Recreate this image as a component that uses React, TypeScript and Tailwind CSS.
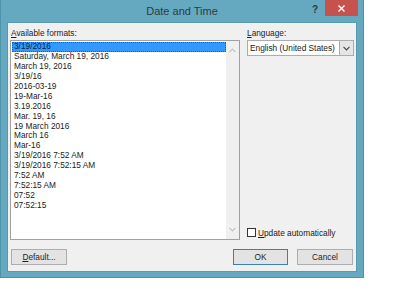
import React from 'react';

const formats = [
  '3/19/2016',
  'Saturday, March 19, 2016',
  'March 19, 2016',
  '3/19/16',
  '2016-03-19',
  '19-Mar-16',
  '3.19.2016',
  'Mar. 19, 16',
  '19 March 2016',
  'March 16',
  'Mar-16',
  '3/19/2016 7:52 AM',
  '3/19/2016 7:52:15 AM',
  '7:52 AM',
  '7:52:15 AM',
  '07:52',
  '07:52:15',
];

function Chevron({ up, className }: { up?: boolean; className?: string }) {
  return (
    <svg width="7" height="5" viewBox="0 0 7 5" className={className}>
      <path
        d={up ? 'M0.5 4.2 L3.5 1 L6.5 4.2' : 'M0.5 0.8 L3.5 4 L6.5 0.8'}
        fill="none"
        stroke="currentColor"
        strokeWidth="1.1"
      />
    </svg>
  );
}

function Button({ children, primary, className }: { children: React.ReactNode; primary?: boolean; className?: string }) {
  return (
    <div
      className={`h-[16px] flex items-center justify-center bg-[#e3e3e3] border ${
        primary ? 'border-[#3c7fb1]' : 'border-[#adadad]'
      } text-[8.3px] text-[#1e1e1e] ${className ?? ''}`}
    >
      {children}
    </div>
  );
}

export default function App() {
  return (
    <div className="w-[400px] h-[304px] bg-white font-['Liberation_Sans',Arial,sans-serif]">
      {/* Window frame */}
      <div className="w-[364px] h-[278px] bg-[#65a9c1] border border-[#4f93ab] border-t-0 flex flex-col">
        {/* Title bar */}
        <div className="h-[22px] relative flex items-center justify-center">
          <span className="text-[11px] text-[#2f3b40] pt-[1px]">Date and Time</span>
          <span className="absolute left-[311px] top-[2px] text-[10px] font-bold text-[#2c3a40]">?</span>
          <div className="absolute left-[324px] top-0 w-[33px] h-[16px] bg-[#c7514d] flex items-center justify-center">
            <svg width="7" height="7" viewBox="0 0 7 7">
              <path d="M0.5 0.5 L6.5 6.5 M6.5 0.5 L0.5 6.5" stroke="#fff" strokeWidth="1.4" />
            </svg>
          </div>
        </div>

        {/* Client area */}
        <div className="mx-[6px] mb-[5px] flex-1 bg-[#f0f0f0] border border-[#5898b0] flex flex-col text-[8.3px] text-[#1a1a1a]">
          <div className="flex pt-[4px]">
            {/* Left column */}
            <div className="ml-[2px] w-[230px] flex flex-col">
              <div className="h-[12px] leading-[12px] pl-[1px] text-[#222]">
                <u>A</u>vailable formats:
              </div>
              <div className="mt-[1px] h-[200px] bg-white border border-[#a0a0a0] flex">
                <div className="flex-1 pt-[1px] pl-[1px]">
                  {formats.map((f, i) => (
                    <div
                      key={f}
                      className={`h-[9.94px] leading-[9.94px] pl-[2px] whitespace-nowrap ${
                        i === 0 ? 'bg-[#3399ff] outline-1 outline-dotted outline-[#1c5ea8] -outline-offset-1 text-[#0b1e3f]' : ''
                      }`}
                    >
                      {f}
                    </div>
                  ))}
                </div>
                <div className="w-[13px] bg-[#f0f0f0] flex flex-col items-center justify-between py-[7px] text-[#c2c2c2]">
                  <Chevron up />
                  <Chevron />
                </div>
              </div>
            </div>

            {/* Right column */}
            <div className="ml-[7px] w-[107px] flex flex-col">
              <div className="h-[12px] leading-[12px] text-[#222]">
                <u>L</u>anguage:
              </div>
              <div className="mt-[1px] h-[16px] bg-white border border-[#acacac] flex items-center">
                <span className="flex-1 pl-[2px] whitespace-nowrap">English (United States)</span>
                <div className="w-[14px] h-full bg-[#e6e6e6] border-l border-[#acacac] flex items-center justify-center text-[#444]">
                  <Chevron />
                </div>
              </div>
              <div className="mt-auto mb-[1px] flex items-center gap-[2px]">
                <div className="w-[9px] h-[9px] bg-white border border-[#333]" />
                <span className="whitespace-nowrap">
                  <u>U</u>pdate automatically
                </span>
              </div>
            </div>
          </div>

          {/* Buttons */}
          <div className="mt-[9px] flex items-center">
            <Button className="ml-[3px] w-[56px]">
              <span>
                <u>D</u>efault...
              </span>
            </Button>
            <Button primary className="ml-auto w-[55px]">
              OK
            </Button>
            <Button className="ml-[9px] mr-[3px] w-[56px]">Cancel</Button>
          </div>
        </div>
      </div>
    </div>
  );
}
